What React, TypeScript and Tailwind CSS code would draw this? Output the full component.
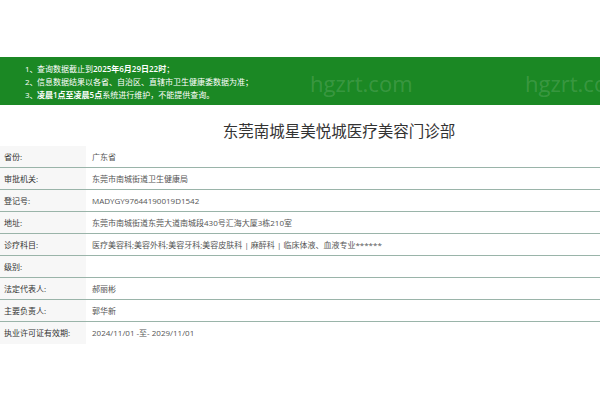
import React from "react";

const rows: [string, string][] = [
  ["省份:", "广东省"],
  ["审批机关:", "东莞市南城街道卫生健康局"],
  ["登记号:", "MADYGY97644190019D1542"],
  ["地址:", "东莞市南城街道东莞大道南城段430号汇海大厦3栋210室"],
  ["诊疗科目:", "医疗美容科;美容外科;美容牙科;美容皮肤科 | 麻醉科 | 临床体液、血液专业******"],
  ["级别:", ""],
  ["法定代表人:", "郝丽彬"],
  ["主要负责人:", "郭华新"],
  ["执业许可证有效期:", "2024/11/01 -至- 2029/11/01"],
];

export default function App() {
  return (
    <div
      className="w-[600px] h-[400px] bg-white overflow-hidden pt-[57px]"
      style={{ fontFamily: '"Open Sans", "Noto Sans CJK SC", sans-serif' }}
    >
      <div className="relative h-[48px] bg-[#1b8824] pt-[5px] pl-[25px] text-[8px] leading-[13px] text-white overflow-hidden">
        <div className="flex">
          <span className="w-[12px]">1、</span>
          <span>
            查询数据截止到<b className="font-semibold">2025年6月29日22时</b>；
          </span>
        </div>
        <div className="flex">
          <span className="w-[12px]">2、</span>
          <span>信息数据结果以各省、自治区、直辖市卫生健康委数据为准；</span>
        </div>
        <div className="flex">
          <span className="w-[12px]">3、</span>
          <span>
            <b className="font-semibold">凌晨1点至凌晨5点</b>系统进行维护，不能提供查询。
          </span>
        </div>
        <span className="absolute left-[310px] top-[12px] text-[22px] leading-[28px] text-white/15">
          hgzrt.com
        </span>
        <span className="absolute left-[525px] top-[12px] text-[22px] leading-[28px] text-white/15">
          hgzrt.com
        </span>
      </div>

      <h1 className="pt-[16px] pb-[5px] pl-[78px] text-center text-[15.5px] leading-[20px] font-normal text-[#333]">
        东莞南城星美悦城医疗美容门诊部
      </h1>

      <div className="text-[8px] leading-[21px]">
        {rows.map(([label, value], i) => (
          <div
            key={label}
            className={
              i < rows.length - 1
                ? "flex h-[22px] border-b border-[#9ab4a9]"
                : "flex h-[22px]"
            }
          >
            <div className="w-[86px] shrink-0 bg-[#f7f7f7] pl-[4px] text-[#333]">{label}</div>
            <div className="pl-[6px] text-[#555] whitespace-nowrap">{value}</div>
          </div>
        ))}
      </div>
    </div>
  );
}
